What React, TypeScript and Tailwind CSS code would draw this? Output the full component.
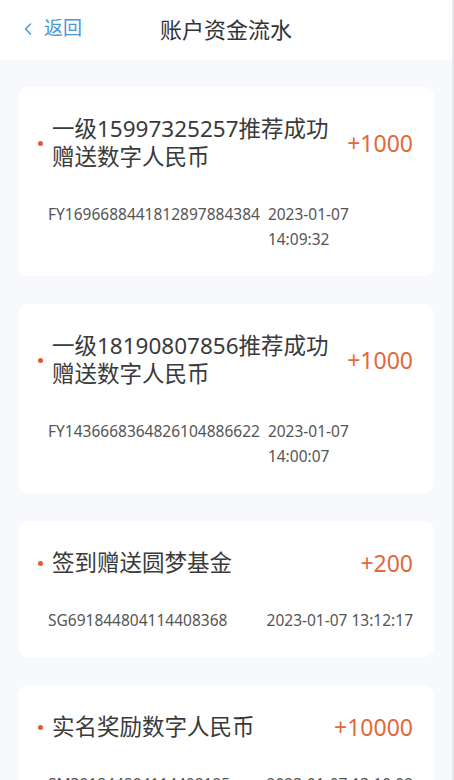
import { ChevronLeft } from "lucide-react";

type Record = {
  title: string[];
  amount: string;
  code: string;
  time: string;
};

const records: Record[] = [
  {
    title: ["一级15997325257推荐成功", "赠送数字人民币"],
    amount: "+1000",
    code: "FY1696688441812897884384",
    time: "2023-01-07 14:09:32",
  },
  {
    title: ["一级18190807856推荐成功", "赠送数字人民币"],
    amount: "+1000",
    code: "FY1436668364826104886622",
    time: "2023-01-07 14:00:07",
  },
  {
    title: ["签到赠送圆梦基金"],
    amount: "+200",
    code: "SG691844804114408368",
    time: "2023-01-07 13:12:17",
  },
  {
    title: ["实名奖励数字人民币"],
    amount: "+10000",
    code: "SM391844804114408125",
    time: "2023-01-07 13:10:02",
  },
];

const font = {
  fontFamily: '"Noto Sans", "Noto Sans CJK SC", sans-serif',
};

export default function App() {
  return (
    <div
      className="min-h-screen w-[454px] bg-[#f7f9fc] border-r-2 border-[#e6e8ec] overflow-hidden"
      style={font}
    >
      <header className="relative h-[60px] bg-white flex items-center">
        <button className="flex items-center pl-[18px] pb-[3px] text-[#4a97d2] text-[19px] gap-[6px]">
          <ChevronLeft size={20} strokeWidth={1.75} />
          <span>返回</span>
        </button>
        <h1 className="absolute left-0 right-0 top-[13px] text-center text-[22px] text-[#333] pointer-events-none">
          账户资金流水
        </h1>
      </header>

      <main className="px-[18px] pt-[27px] flex flex-col gap-[28px]">
        {records.map((r) => (
          <div key={r.code} className="bg-white rounded-[10px] pt-[28px] pb-[24px]">
            <div className="flex items-center pl-[20px] pr-[21px]">
              <span className="w-[5px] h-[5px] rounded-full bg-[#e15b2c] shrink-0" />
              <div className="ml-[9px] flex-1 text-[22.5px] leading-[28px] text-[#3a3a3a]">
                {r.title.map((t) => (
                  <div key={t}>{t}</div>
                ))}
              </div>
              <span className="text-[23px] leading-[28px] text-[#e2683b] shrink-0">{r.amount}</span>
            </div>
            <div className="mt-[31px] flex justify-between gap-[8px] pl-[30px] pr-[21px] text-[15.5px] leading-[25px] text-[#555]">
              <span className="shrink-0">{r.code}</span>
              <span>{r.time}</span>
            </div>
          </div>
        ))}
      </main>
    </div>
  );
}
